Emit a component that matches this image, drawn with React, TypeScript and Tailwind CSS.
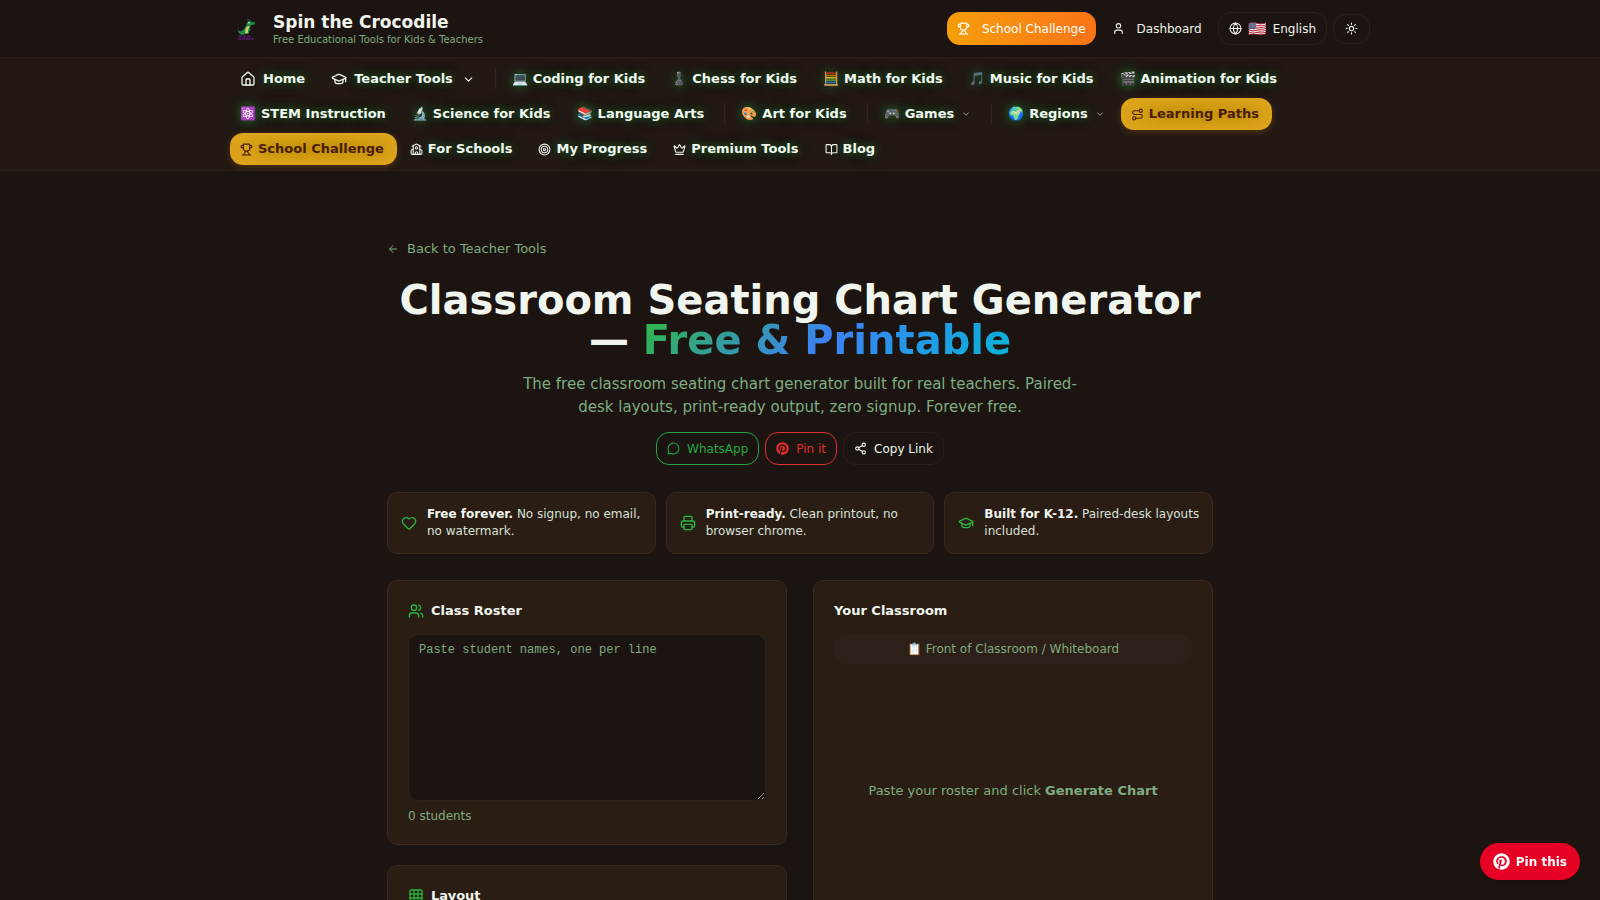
import { useState } from "react";
import {
  ArrowLeft,
  BookOpen,
  ChevronDown,
  Crown,
  Globe,
  GraduationCap,
  Grid3x3,
  Heart,
  House,
  MessageCircle,
  Printer,
  Route,
  School,
  Share2,
  Sun,
  Target,
  Trophy,
  User,
  Users,
} from "lucide-react";
import { FaPinterest } from "react-icons/fa";

interface NavLink {
  label: string;
  emoji?: string;
  icon?: React.ElementType;
  hasMenu?: boolean;
  highlight?: boolean;
  divider?: boolean; // vertical line before the item
  wide?: boolean;
}

const navLinks: NavLink[] = [
  { label: "Home", icon: House, wide: true },
  { label: "Teacher Tools", icon: GraduationCap, hasMenu: true, wide: true },
  { label: "Coding for Kids", emoji: "💻", divider: true },
  { label: "Chess for Kids", emoji: "♟️" },
  { label: "Math for Kids", emoji: "🧮" },
  { label: "Music for Kids", emoji: "🎵" },
  { label: "Animation for Kids", emoji: "🎬" },
  { label: "STEM Instruction", emoji: "⚛️" },
  { label: "Science for Kids", emoji: "🔬" },
  { label: "Language Arts", emoji: "📚" },
  { label: "Art for Kids", emoji: "🎨", divider: true },
  { label: "Games", emoji: "🎮", hasMenu: true, divider: true },
  { label: "Regions", emoji: "🌍", hasMenu: true, divider: true },
  { label: "Learning Paths", icon: Route, highlight: true },
  { label: "School Challenge", icon: Trophy, highlight: true },
  { label: "For Schools", icon: School },
  { label: "My Progress", icon: Target },
  { label: "Premium Tools", icon: Crown },
  { label: "Blog", icon: BookOpen },
];

const features = [
  { icon: Heart, title: "Free forever.", text: "No signup, no email, no watermark." },
  { icon: Printer, title: "Print-ready.", text: "Clean printout, no browser chrome." },
  { icon: GraduationCap, title: "Built for K-12.", text: "Paired-desk layouts included." },
];

function CrocodileLogo() {
  return (
    <svg viewBox="0 0 36 36" className="h-9 w-9 shrink-0" aria-hidden="true">
      <g transform="translate(0 3) scale(0.86)">
        <path d="M9 17c1 4 4 4 7 1l3-5 1-4 3-1 6 2v2l-5 1-1 4 1 2-2 1v3h-5l-1 1h-3c-3-1-4-4-4-7z" fill="#1f8f45" />
        <path d="M19 15l3-1 1 1-2 3v4l-3 1c-1-3 0-5 1-8z" fill="#c9c873" />
        <path d="M19 8l1-3 4 1v3z" fill="#1c3b30" />
        <circle cx="22" cy="10" r="1" fill="#e8f0dd" />
        <path d="M10 26h15M9 29h19" stroke="#57186f" strokeWidth="2" strokeDasharray="4 1" />
      </g>
    </svg>
  );
}

function NavItem({ item }: { item: NavLink }) {
  const Icon = item.icon;
  const look = item.highlight
    ? "bg-radial from-[#d09c08] to-[#dfa51e] text-[#4a1c08] shadow-[0_2px_6px_#a8650059] [text-shadow:0_0_8px_#8a6a0080]"
    : "text-[#f0f7f0] [text-shadow:0_0_8px_#1f8c3699,0_0_14px_#14642880]";
  return (
    <li className="flex items-center gap-1">
      {item.divider && <span className="mr-0.5 ml-1 h-5 w-px bg-[#35241a]" />}
      <a
        href="#"
        className={`flex h-8 items-center rounded-[13px] pr-[13px] pl-2.5 text-[13px] font-bold whitespace-nowrap ${
          item.wide ? "gap-[7px]" : "gap-[5px]"
        } ${look}`}
      >
        {Icon && <Icon className={item.wide ? "size-4" : "size-[13px]"} />}
        {item.emoji && <span className="w-4 text-center font-normal">{item.emoji}</span>}
        {item.label}
        {item.hasMenu && (
          <ChevronDown className={item.wide ? "ml-0.5 size-[13px]" : "ml-0.5 size-2.5 opacity-70"} />
        )}
      </a>
    </li>
  );
}

function Header() {
  return (
    <header className="border-b border-[#2d1c18]">
      <div className="mx-auto flex h-[57px] w-full max-w-[1140px] items-center justify-between">
        <a href="#" className="flex items-center gap-[7px]">
          <CrocodileLogo />
          <span className="flex flex-col pt-0.5">
            <span className="text-[17px] leading-5 font-bold">Spin the Crocodile</span>
            <span className="text-[10px] leading-[15px] text-[#7fac82]">
              Free Educational Tools for Kids &amp; Teachers
            </span>
          </span>
        </a>

        <div className="flex items-center gap-1.5 text-[12px]">
          <a
            href="#"
            className="flex h-[33px] items-center gap-3 rounded-[13px] bg-linear-to-r from-[#f59e0b] to-[#f97316] px-2.5 text-white"
          >
            <Trophy className="size-[13px]" />
            School Challenge
          </a>
          <a href="#" className="flex h-[33px] items-center gap-3 px-2.5">
            <User className="size-[13px]" />
            Dashboard
          </a>
          <button className="flex h-[33px] items-center gap-1.5 rounded-[13px] border border-[#2c1e18] px-2.5">
            <Globe className="size-[13px]" />
            <span className="text-[15px] leading-4">🇺🇸</span>
            English
          </button>
          <button
            aria-label="Toggle theme"
            className="flex h-[30px] w-[37px] items-center justify-center rounded-[13px] border border-[#2c1e18]"
          >
            <Sun className="size-[13px]" />
          </button>
        </div>
      </div>
    </header>
  );
}

export default function App() {
  const [roster, setRoster] = useState("");
  const count = roster.split("\n").filter((name) => name.trim()).length;

  return (
    <div className="min-h-screen bg-[#1c1410] font-['DejaVu_Sans',sans-serif] text-[#f0f5ee]">
      <Header />

      {/* category navigation */}
      <nav className="border-b border-[#2f2018] bg-[#221914] py-[5px]">
        <ul className="mx-auto flex w-full max-w-[1140px] flex-wrap items-center gap-[3px]">
          {navLinks.map((item) => (
            <NavItem key={item.label} item={item} />
          ))}
        </ul>
      </nav>

      <main className="mx-auto w-full max-w-[826px] pt-[67px] pb-12">
        <a href="#" className="inline-flex items-center gap-2 text-[13px] leading-5 text-[#7fac82]">
          <ArrowLeft className="size-3" />
          Back to Teacher Tools
        </a>

        {/* hero */}
        <section className="mt-[18px] flex flex-col items-center text-center">
          <h1 className="text-[40px] leading-10 font-bold">
            Classroom Seating Chart Generator —{" "}
            <span className="bg-[linear-gradient(135deg,#2fb944,#3b82f6_50%,#06b6d4)] bg-clip-text text-transparent">
              Free &amp; Printable
            </span>
          </h1>
          <p className="mt-[13px] max-w-[560px] text-[15px] leading-[23px] text-[#7fac82]">
            The free classroom seating chart generator built for real teachers. Paired-desk layouts,
            print-ready output, zero signup. Forever free.
          </p>
          <div className="mt-[13px] flex gap-1.5 text-[12px]">
            <button className="flex h-[33px] items-center gap-[7px] rounded-[13px] border border-[#22a745] px-2.5 text-[#22a745]">
              <MessageCircle className="size-[13px]" />
              WhatsApp
            </button>
            <button className="flex h-[33px] items-center gap-[7px] rounded-[13px] border border-[#dc2f2f] px-2.5 text-[#e02b2b]">
              <FaPinterest className="size-[13px]" />
              Pin it
            </button>
            <button className="flex h-[33px] items-center gap-[7px] rounded-[13px] border border-[#2c1e18] px-2.5">
              <Share2 className="size-[13px]" />
              Copy Link
            </button>
          </div>
        </section>

        <section className="mt-[27px] grid grid-cols-3 gap-2.5">
          {features.map(({ icon: Icon, title, text }) => (
            <div
              key={title}
              className="flex items-center gap-2.5 rounded-[10px] border border-[#3a281b] bg-[#291d14] py-[13px] pr-2 pl-[13px]"
            >
              <Icon className="size-4 shrink-0 text-[#2bb63d]" />
              <p className="text-[12px] leading-[17px] text-[#dbe0d7]">
                <strong className="text-[#f0f5ee]">{title}</strong> {text}
              </p>
            </div>
          ))}
        </section>

        <section className="mt-[26px] grid grid-cols-2 gap-[26px]">
          <div className="flex flex-col gap-5">
            <div className="rounded-[10px] border border-[#3a281b] bg-[#291d14] p-5">
              <h2 className="flex items-center gap-[7px] text-[13px] leading-5 font-bold">
                <Users className="size-4 text-[#2bb63d]" />
                <label htmlFor="roster">Class Roster</label>
              </h2>
              <textarea
                id="roster"
                value={roster}
                onChange={(e) => setRoster(e.target.value)}
                placeholder="Paste student names, one per line"
                className="mt-[13px] block h-[167px] w-full rounded-[10px] border border-[#2f2118] bg-[#1c1410] px-2.5 py-[7px] font-['Liberation_Mono',monospace] text-[12px] leading-4 placeholder:text-[#7fac82]"
              />
              <p className="mt-[7px] text-[12px] leading-4 text-[#7fac82]">{count} students</p>
            </div>
            <div className="h-60 rounded-[10px] border border-[#3a281b] bg-[#291d14] p-5">
              <h2 className="flex items-center gap-[7px] text-[13px] leading-5 font-bold">
                <Grid3x3 className="size-4 text-[#2bb63d]" />
                Layout
              </h2>
            </div>
          </div>

          <div className="flex flex-col rounded-[10px] border border-[#3a281b] bg-[#291d14] p-5">
            <h2 className="text-[13px] leading-5 font-bold">Your Classroom</h2>
            <div className="mt-[13px] rounded-[13px] bg-[#2d2018] py-[7px] text-center text-[12px] leading-4 text-[#7fac82]">
              📋 Front of Classroom / Whiteboard
            </div>
            <p className="py-[117px] text-center text-[13px] leading-5 text-[#7fac82]">
              Paste your roster and click <strong>Generate Chart</strong>
            </p>
          </div>
        </section>
      </main>

      <button className="fixed right-5 bottom-5 flex h-[37px] items-center gap-1.5 rounded-full bg-[#e60023] px-[13px] text-[12px] font-bold text-white shadow-lg">
        <FaPinterest className="size-[17px]" />
        Pin this
      </button>
    </div>
  );
}
